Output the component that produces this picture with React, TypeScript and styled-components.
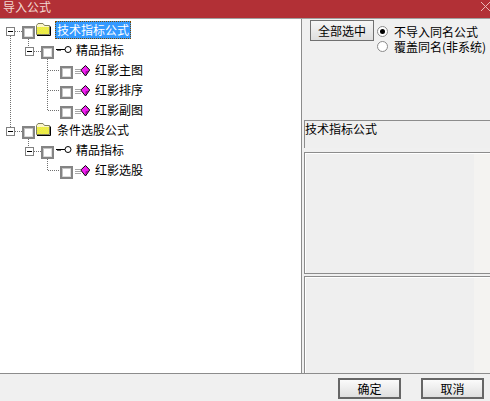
import React from "react";
import styled, { createGlobalStyle } from "styled-components";

const Global = createGlobalStyle`
  html, body { margin: 0; padding: 0; background: #f0f0f0; }
  body { font-family: "Noto Sans CJK SC", "Liberation Sans", sans-serif; font-size: 12px; color: #000; }
`;
const Dialog = styled.div`
  width: 490px; height: 401px; display: flex; flex-direction: column; overflow: hidden; background: #f0f0f0;
`;
const TitleBar = styled.header`
  height: 18px; flex: none; background: #b23036; border-bottom: 1px solid #a0a0a0;
  display: flex; align-items: flex-start; justify-content: space-between;
`;
const TitleText = styled.span`
  color: #f3d9d2; font-size: 12px; line-height: 13px; margin: 0 0 0 3px;
`;
const CloseIcon = styled.svg`
  width: 10px; height: 11px; margin: 1px 0 0 0; flex: none;
`;
const Main = styled.main`
  height: 354px; flex: none; display: flex; border-bottom: 1px solid #8c8c8c;
`;
const TreePanel = styled.section`
  width: 301px; flex: none; background: #fff; border-right: 1px solid #8c8c8c; padding-top: 3px;
  position: relative;
`;
const Connectors = styled.svg`
  position: absolute; left: 0; top: 0; width: 301px; height: 354px; pointer-events: none;
`;
const Row = styled.div<{ $start: number }>`
  height: 20px; display: flex; align-items: flex-start; padding-left: ${p => p.$start}px; position: relative;
`;
const Expander = styled.span`
  width: 9px; height: 9px; box-sizing: border-box; border: 1px solid #808080; background: #fff;
  margin: 5px 7px 0 0; flex: none; display: flex; align-items: center; justify-content: center;
  &::after { content: ""; width: 5px; height: 1px; background: #000; }
`;
const Check = styled.span`
  width: 13px; height: 13px; box-sizing: border-box; border: 2px solid #848484; background: #fff; flex: none;
  margin-top: 4px; box-shadow: inset 1px 1px 0 #c4c4c4, inset -1px -1px 0 #dcdcdc;
`;
const IconSvg = styled.svg<{ $w: number; $left: number; $top: number }>`
  width: ${p => p.$w}px; flex: none; margin-left: ${p => p.$left}px; margin-top: ${p => p.$top}px; display: block;
`;
const Label = styled.span<{ $selected?: boolean; $left: number }>`
  font-size: 12px; line-height: 16px; white-space: nowrap; margin-left: ${p => p.$left}px; margin-top: -1px;
  padding: 0 1px;
  border: 1px ${p => (p.$selected ? "dotted #7a4a00" : "solid transparent")};
  background: ${p => (p.$selected ? "#3399ff" : "transparent")};
  color: ${p => (p.$selected ? "#fff" : "#000")};
`;
const Side = styled.aside`
  flex: 1; display: flex; flex-direction: column; min-width: 0; padding-left: 2px;
`;
const Options = styled.div`
  height: 101px; flex: none; display: flex; align-items: flex-start; padding: 1px 0 0 6px; box-sizing: border-box;
`;
const SelectAll = styled.button`
  width: 64px; height: 21px; box-sizing: border-box; border: 1px solid #707070; padding: 0; border-radius: 0;
  background: linear-gradient(#f6f6f6, #dedede); font: inherit; line-height: 18px; color: #000; flex: none;
`;
const RadioGroup = styled.div`
  display: flex; flex-direction: column; margin: 4px 0 0 3px;
`;
const RadioRow = styled.label`
  height: 15px; display: flex; align-items: center; white-space: nowrap; line-height: 15px;
`;
const RadioDot = styled.span<{ $on?: boolean }>`
  width: 11px; height: 11px; box-sizing: border-box; border-radius: 50%; background: #fff; border: 1px solid #8a8a8a;
  margin-right: 6px; flex: none; display: flex; align-items: center; justify-content: center;
  &::after { content: ""; width: 5px; height: 5px; border-radius: 50%; background: ${p => (p.$on ? "#000" : "transparent")}; }
`;
const InfoLabel = styled.div`
  height: 28px; flex: none; box-sizing: border-box; border-top: 1px solid #8c8c8c; border-left: 1px solid #8c8c8c;
  background: #efefef; line-height: 16px; margin-bottom: 4px; white-space: nowrap;
`;
const Pane = styled.div<{ $h: number; $open?: boolean }>`
  height: ${p => p.$h}px; flex: none; box-sizing: border-box; border: 1px solid #8c8c8c; border-right: 0;
  border-bottom-width: ${p => (p.$open ? 0 : 1)}px;
  background: linear-gradient(to right, #efefef 169px, #f4f3f1 169px);
  box-shadow: inset 1px 1px 0 #fff;
`;
const PaneGap = styled.div`
  height: 2px; flex: none;
`;
const Footer = styled.footer`
  flex: 1; display: flex; align-items: flex-start; justify-content: flex-end; gap: 20px; padding: 4px 6px 0 0;
`;
const FootButton = styled.button`
  width: 63px; height: 21px; box-sizing: border-box; border: 2px solid #666; padding: 0; border-radius: 0;
  background: linear-gradient(#fbfbfb, #dfdfdf); font: inherit; line-height: 16px; color: #000;
`;

const Folder = () => (
  <IconSvg $w={15} $left={1} $top={1} height="13" viewBox="0 0 15 13">
    <defs>
      <pattern id="dither" width="2" height="2" patternUnits="userSpaceOnUse">
        <rect width="2" height="2" fill="#ffff20" />
        <rect width="1" height="1" fill="#d8d870" />
        <rect x="1" y="1" width="1" height="1" fill="#d8d870" />
      </pattern>
    </defs>
    <path d="M.5 11.5V2.5L2 .5H7L8.5 2.5H13.5V11.5Z" fill="#fbf6c8" stroke="#808060" />
    <rect x="1" y="4" width="12" height="7" fill="url(#dither)" />
    <path d="M1 12.5H14.5V3.5" fill="none" stroke="#000" />
  </IconSvg>
);
const KeyIcon = () => (
  <IconSvg $w={16} $left={2} $top={4} height="8" viewBox="0 0 16 8">
    <path d="M0 3.5H9" stroke="#000" strokeWidth="1" />
    <path d="M1 4.5H5" stroke="#666" strokeWidth="1" />
    <circle cx="12" cy="3.5" r="3" fill="#fff" stroke="#000" />
  </IconSvg>
);
const GemIcon = () => (
  <IconSvg $w={15} $left={2} $top={3} height="12" viewBox="0 0 15 12">
    <path d="M0 4.5H6M0 6.5H6M0 8.5H6" stroke="#a8a8a8" strokeWidth="1" />
    <path d="M10.5 .5L14.7 5L10.5 11L6.3 5.8V4.5Z" fill="#f020f0" stroke="#000" />
    <path d="M10.5 6.5L13.5 5.5L10.5 10Z" fill="#a000a0" />
  </IconSvg>
);

const Tree = () => (
  <TreePanel>
    <Connectors viewBox="0 0 301 354">
      <g stroke="#707070" strokeWidth="1" strokeDasharray="1 1" fill="none" transform="translate(0,-19)">
        <path d="M10.5 36V127M15 31.5H22M28.5 39V46M34 51.5H41M47.5 59V110.5M48 70.5H60M48 90.5H60M48 110.5H60" />
        <path d="M15 131.5H22M28.5 139V146M34 151.5H41M47.5 159V170.5M48 170.5H60" />
      </g>
    </Connectors>
    <Row $start={6}><Expander /><Check /><Folder /><Label $selected $left={4}>技术指标公式</Label></Row>
    <Row $start={25}><Expander /><Check /><KeyIcon /><Label $left={2}>精品指标</Label></Row>
    <Row $start={60}><Check /><GemIcon /><Label $left={3}>红影主图</Label></Row>
    <Row $start={60}><Check /><GemIcon /><Label $left={3}>红影排序</Label></Row>
    <Row $start={60}><Check /><GemIcon /><Label $left={3}>红影副图</Label></Row>
    <Row $start={6}><Expander /><Check /><Folder /><Label $left={4}>条件选股公式</Label></Row>
    <Row $start={25}><Expander /><Check /><KeyIcon /><Label $left={2}>精品指标</Label></Row>
    <Row $start={60}><Check /><GemIcon /><Label $left={3}>红影选股</Label></Row>
  </TreePanel>
);

export default function App() {
  return (
    <Dialog>
      <Global />
      <TitleBar>
        <TitleText>导入公式</TitleText>
        <CloseIcon viewBox="0 0 10 11">
          <path d="M1 1L10 10M10 1L1 10" stroke="#e9b9b5" strokeWidth="1" />
        </CloseIcon>
      </TitleBar>
      <Main>
        <Tree />
        <Side>
          <Options>
            <SelectAll>全部选中</SelectAll>
            <RadioGroup>
              <RadioRow><RadioDot $on />不导入同名公式</RadioRow>
              <RadioRow><RadioDot />覆盖同名(非系统)</RadioRow>
            </RadioGroup>
          </Options>
          <InfoLabel>技术指标公式</InfoLabel>
          <Pane $h={122} />
          <PaneGap />
          <Pane $h={97} $open />
        </Side>
      </Main>
      <Footer>
        <FootButton>确定</FootButton>
        <FootButton>取消</FootButton>
      </Footer>
    </Dialog>
  );
}
